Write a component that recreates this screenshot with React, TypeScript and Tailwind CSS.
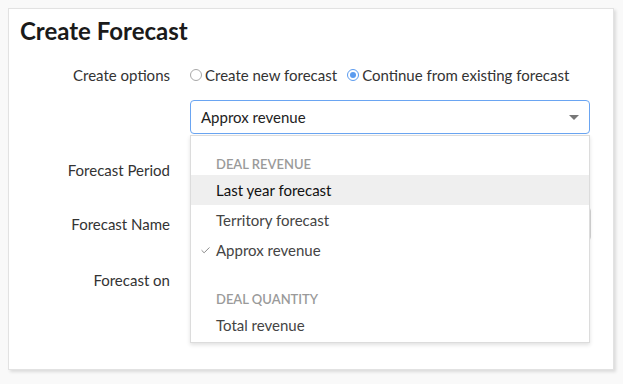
import { Check } from "lucide-react";

const menuGroups = [
  {
    title: "Deal Revenue",
    items: ["Last year forecast", "Territory forecast", "Approx revenue"],
  },
  {
    title: "Deal Quantity",
    items: ["Total revenue"],
  },
];

export default function App() {
  const selected = "Approx revenue";
  const hovered = "Last year forecast";

  return (
    <div
      className="w-[623px] h-[384px] bg-[#f9f9f9] pt-2 pl-2"
      style={{ fontFamily: "Lato, 'Open Sans', sans-serif" }}
    >
      <div className="w-[606px] h-[362px] bg-white border border-[#e2e2e2] shadow-[2px_2px_3px_rgba(0,0,0,0.12)] pl-[11px] pr-3 pt-[7px]">
        <h1 className="text-[24px] leading-[30px] font-bold text-[#1a1a1a]">
          Create Forecast
        </h1>

        <div className="flex flex-col">
          <div className="mt-[17px] flex items-center h-6">
            <div className="w-[150px] text-right text-[15px] text-[#333]">
              Create options
            </div>
            <div className="ml-5 flex items-center text-[15px] text-[#333]">
              <span className="w-3 h-3 rounded-full border border-[#a8a8a8] bg-white" />
              <span className="ml-[3px]">Create new forecast</span>
              <span className="ml-[10px] w-3 h-3 rounded-full border border-[#5b9bef] flex items-center justify-center">
                <span className="w-[6px] h-[6px] rounded-full bg-[#5b9bef]" />
              </span>
              <span className="ml-[3px]">Continue from existing forecast</span>
            </div>
          </div>

          <div className="mt-[13px] flex h-[34px]">
            <div className="w-[150px]" />
            <div className="ml-5 relative w-[400px]">
              <div className="h-[34px] rounded border border-[#6aa5f2] flex items-center justify-between pl-[10px] pr-[10px] text-[15px] text-[#222]">
                <span>{selected}</span>
                <span className="w-0 h-0 border-l-[5px] border-r-[5px] border-t-[5px] border-l-transparent border-r-transparent border-t-[#777]" />
              </div>

              <div className="absolute left-0 top-[35px] w-[400px] h-[208px] bg-white border border-[#dcdcdc] shadow-[0_2px_4px_rgba(0,0,0,0.12)] z-10 pt-[14px]">
                {menuGroups.map((group, gi) => (
                  <div key={group.title} className={gi > 0 ? "mt-5" : ""}>
                    <div className="h-[25px] pt-1 pl-[25px] flex items-center text-[13px] font-semibold uppercase text-[#9a9a9a]">
                      {group.title}
                    </div>
                    {group.items.map((item) => (
                      <div
                        key={item}
                        className={
                          "relative h-[30px] pl-[25px] flex items-center text-[15px] " +
                          (item === hovered
                            ? "bg-[#efefef] text-[#111]"
                            : "text-[#444]")
                        }
                      >
                        {item === selected && (
                          <Check
                            size={11}
                            strokeWidth={1.5}
                            className="absolute left-[9px] text-[#555]"
                          />
                        )}
                        {item}
                      </div>
                    ))}
                  </div>
                ))}
              </div>
            </div>
          </div>

          <div className="mt-[19px] flex items-center h-[34px]">
            <div className="w-[150px] text-right text-[15px] text-[#333]">
              Forecast Period
            </div>
            <div className="ml-5 w-[400px] h-[34px] rounded border border-[#d6d6d6]" />
          </div>

          <div className="mt-5 flex items-center h-[34px]">
            <div className="w-[150px] text-right text-[15px] text-[#333]">
              Forecast Name
            </div>
            <div className="ml-5 w-[401px] h-[34px] rounded border border-[#d6d6d6]" />
          </div>

          <div className="mt-[22px] flex items-center h-[34px]">
            <div className="w-[150px] text-right text-[15px] text-[#333]">
              Forecast on
            </div>
          </div>
        </div>
      </div>
    </div>
  );
}
